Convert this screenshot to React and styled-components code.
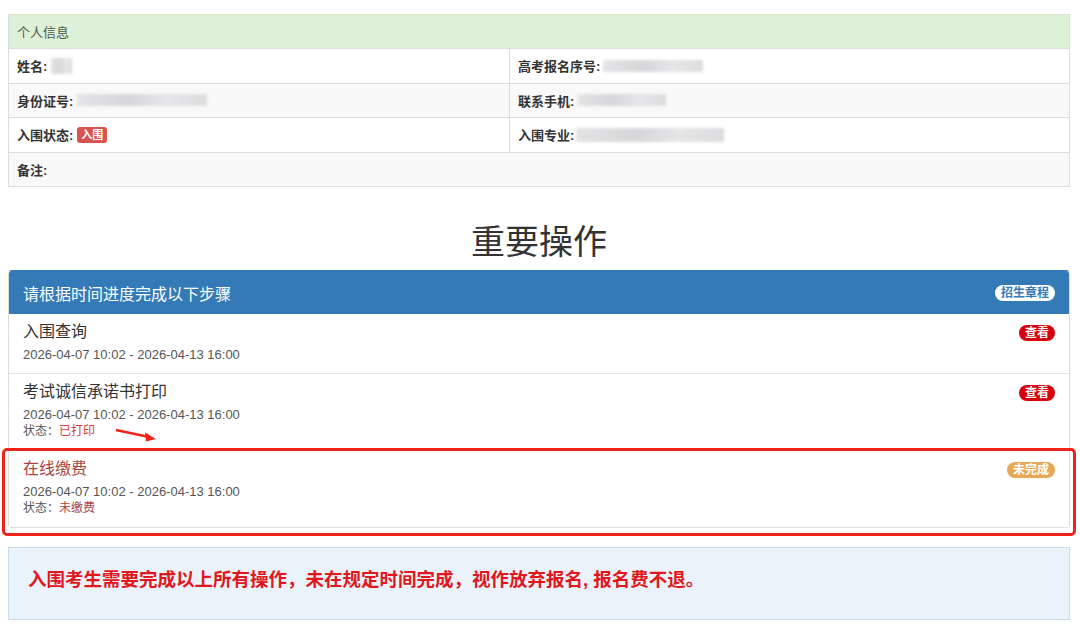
import React from "react";
import styled, { createGlobalStyle } from "styled-components";

const GlobalStyle = createGlobalStyle`
  body {
    margin: 0;
    background: #fff;
    font-family: "Liberation Sans", "Noto Sans CJK SC", sans-serif;
    color: #333;
  }
`;

const Page = styled.div`
  width: 1062px;
  padding: 14px 10px 0 8px;
`;

const InfoTable = styled.div`
  display: grid;
  grid-template-columns: 501px 1fr;
  border: 1px solid #ddd;
  border-top-color: #d6e9c6;
`;

const InfoHead = styled.div`
  grid-column: 1 / -1;
  height: 33px;
  display: flex;
  align-items: center;
  padding: 0 8px;
  background: #dff0d8;
  color: #4a5a4a;
  font-size: 13px;
`;

const Cell = styled.div`
  grid-column: ${({ $full }) => ($full ? "1 / -1" : "auto")};
  height: 33.5px;
  display: flex;
  align-items: center;
  padding: 0 8px;
  border-top: 1px solid #ddd;
  border-right: ${({ $left }) => ($left ? "1px solid #ddd" : "0")};
  background: ${({ $striped }) => ($striped ? "#f9f9f9" : "#fff")};
  font-size: 13px;
  font-weight: bold;
  color: #333;
`;

const Blur = styled.span`
  display: inline-block;
  width: ${({ $w }) => $w}px;
  height: ${({ $h }) => $h || 12}px;
  margin-left: ${({ $ml }) => $ml || 2}px;
  background: linear-gradient(90deg, #e4e4e6, #d6d6d8 40%, #e6e6e8 70%, #dcdcde);
  filter: blur(1.5px);
`;

const Label = styled.span`
  display: inline-block;
  margin-left: 4px;
  padding: 1px 4px;
  background: #d9534f;
  color: #fff;
  font-size: 11px;
  font-weight: bold;
  border-radius: 3px;
  line-height: 14px;
`;

const Title = styled.h1`
  margin: 0;
  padding: 33px 0 6px;
  text-align: center;
  font-weight: normal;
  font-size: 34px;
  line-height: 44px;
  color: #333;
`;

const Panel = styled.div`
  border: 1px solid #ddd;
  border-top-color: #337ab7;
  border-radius: 4px;
`;

const PanelHead = styled.div`
  display: flex;
  align-items: center;
  justify-content: space-between;
  height: 43px;
  padding: 0 14px;
  background: #337ab7;
  color: #fff;
  font-size: 16px;
  border-radius: 3px 3px 0 0;
`;

const Pill = styled.span`
  display: inline-block;
  padding: 0 6px;
  border-radius: 9px;
  font-size: 12px;
  font-weight: bold;
  line-height: 16px;
  background: ${({ $bg }) => $bg};
  color: ${({ $color }) => $color || "#fff"};
`;

const Item = styled.div`
  position: relative;
  padding: 8px 14px 10px;
  border-top: ${({ $first }) => ($first ? "0" : "1px solid #e3e3e3")};
  background: #fff;

  ${({ $marked }) =>
    $marked &&
    `
    &::after {
      content: "";
      position: absolute;
      top: -3px;
      left: -7px;
      right: -7px;
      bottom: -9px;
      border: 3.5px solid #f2231b;
      border-radius: 5px;
      pointer-events: none;
    }
  `}
`;

const ItemTop = styled.div`
  display: flex;
  justify-content: space-between;
  align-items: flex-start;
`;

const ItemTitle = styled.div`
  font-size: 16px;
  line-height: 20px;
  color: ${({ $color }) => $color || "#333"};
`;

const BadgeWrap = styled.div`
  padding-top: 1px;
`;

const DateLine = styled.div`
  margin-top: 4px;
  font-size: 13px;
  line-height: 17px;
  color: #555;
`;

const Status = styled.div`
  font-size: 12px;
  line-height: 17px;
  color: #555;

  b {
    font-weight: normal;
    color: ${({ $color }) => $color};
  }
`;

const Arrow = styled.svg`
  position: absolute;
  left: 100px;
  top: 52px;
`;

const Alert = styled.div`
  margin-top: 19px;
  padding: 20px 19px 27px;
  background: #eaf3fb;
  border: 1px solid #c9dce9;
  color: #e3161b;
  font-size: 18.5px;
  font-weight: bold;
  line-height: 24px;
`;

const steps = [
  { title: "入围查询", badge: "查看", bg: "#d7000f" },
  {
    title: "考试诚信承诺书打印",
    badge: "查看",
    bg: "#d7000f",
    status: "已打印",
    statusColor: "#d43f3a",
    arrow: true,
  },
  {
    title: "在线缴费",
    titleColor: "#a94442",
    badge: "未完成",
    bg: "#e9a857",
    status: "未缴费",
    statusColor: "#a94442",
    marked: true,
  },
];

export default function App() {
  return (
    <Page>
      <GlobalStyle />
      <InfoTable>
        <InfoHead>个人信息</InfoHead>
        <Cell $left>
          姓名:<Blur $w={21} $h={16} $ml={4} />
        </Cell>
        <Cell>
          高考报名序号: <Blur $w={100} $ml={3} />
        </Cell>
        <Cell $left $striped>
          身份证号: <Blur $w={130} $ml={4} />
        </Cell>
        <Cell $striped>
          联系手机: <Blur $w={88} $ml={4} />
        </Cell>
        <Cell $left>
          入围状态: <Label>入围</Label>
        </Cell>
        <Cell>
          入围专业:<Blur $w={148} $h={14} $ml={2} />
        </Cell>
        <Cell $full $striped>
          备注:
        </Cell>
      </InfoTable>

      <Title>重要操作</Title>

      <Panel>
        <PanelHead>
          <span>请根据时间进度完成以下步骤</span>
          <Pill $bg="#fff" $color="#337ab7">
            招生章程
          </Pill>
        </PanelHead>
        {steps.map((s, i) => (
          <Item key={s.title} $first={i === 0} $marked={s.marked}>
            <ItemTop>
              <ItemTitle $color={s.titleColor}>{s.title}</ItemTitle>
              <BadgeWrap>
                <Pill $bg={s.bg}>{s.badge}</Pill>
              </BadgeWrap>
            </ItemTop>
            <DateLine>2026-04-07 10:02 - 2026-04-13 16:00</DateLine>
            {s.status && (
              <Status $color={s.statusColor}>
                状态：<b>{s.status}</b>
              </Status>
            )}
            {s.arrow && (
              <Arrow width="52" height="18" viewBox="0 0 52 18">
                <path d="M7 4 L40 11" stroke="#f2231b" strokeWidth="2.5" fill="none" />
                <path d="M47 13 L36 6.5 L37 15.5 Z" fill="#f2231b" />
              </Arrow>
            )}
          </Item>
        ))}
      </Panel>

      <Alert>入围考生需要完成以上所有操作，未在规定时间完成，视作放弃报名, 报名费不退。</Alert>
    </Page>
  );
}
